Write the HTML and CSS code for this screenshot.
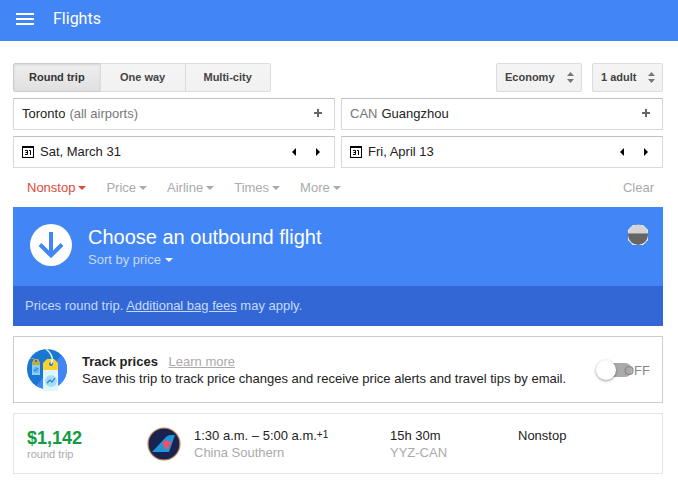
FILE: index.html
```
<!DOCTYPE html>
<html lang="en">
<head>
  <meta charset="UTF-8">
  <meta name="viewport" content="width=device-width, initial-scale=1">
  <title>Flights</title>
  <link rel="stylesheet" href="styles.css">
</head>
<body>
  <header class="topbar">
    <button class="menu-btn" aria-label="Main menu">
      <svg width="18" height="12" viewBox="0 0 18 12" fill="#fff"><path d="M0 0h18v2H0zM0 5h18v2H0zM0 10h18v2H0z"/></svg>
    </button>
    <h1>Flights</h1>
  </header>

  <main>
    <form class="search">
      <div class="options">
        <div class="tabs">
          <button type="button" class="tab active">Round trip</button>
          <button type="button" class="tab">One way</button>
          <button type="button" class="tab">Multi-city</button>
        </div>
        <div class="select-box cabin">
          <select aria-label="Cabin class">
            <option>Economy</option>
            <option>Business</option>
            <option>First</option>
          </select>
          <svg width="7" height="11" viewBox="0 0 7 11" fill="#777"><path d="M3.500 0L7 4H0zM0 7h7l-3.500 4z"/></svg>
        </div>
        <div class="select-box people">
          <select aria-label="Passengers">
            <option>1 adult</option>
            <option>2 adults</option>
          </select>
          <svg width="7" height="11" viewBox="0 0 7 11" fill="#777"><path d="M3.500 0L7 4H0zM0 7h7l-3.500 4z"/></svg>
        </div>
      </div>

      <div class="fields">
        <div class="field">
          <input class="place" type="text" value="Toronto" aria-label="From">
          <span class="hint">(all airports)</span>
          <button type="button" class="step" aria-label="Add origin">
            <svg width="8" height="8" viewBox="0 0 8 8" fill="#666"><path d="M3 0h2v3h3v2H5v3H3V5H0V3h3z"/></svg>
          </button>
        </div>
        <div class="field">
          <span class="hint">CAN</span>
          <input class="place" type="text" value="Guangzhou" aria-label="To">
          <button type="button" class="step" aria-label="Add destination">
            <svg width="8" height="8" viewBox="0 0 8 8" fill="#666"><path d="M3 0h2v3h3v2H5v3H3V5H0V3h3z"/></svg>
          </button>
        </div>
        <div class="field">
          <svg class="cal" width="12" height="12" viewBox="0 0 12 12"><path d="M0 0h12v12H0zM1 2v9h10V2z" fill="#000" fill-rule="evenodd"/><path d="M3 4.500h2.500v4H3M3.500 6.500h2M7 4.500h1.500v4.500" fill="none" stroke="#000"/></svg>
          <input class="date" type="text" value="Sat, March 31" aria-label="Departure date">
          <button type="button" class="step" aria-label="Earlier departure">
            <svg width="4" height="8" viewBox="0 0 4 8"><path d="M4 0v8L0 4z"/></svg>
          </button>
          <button type="button" class="step" aria-label="Later departure">
            <svg width="4" height="8" viewBox="0 0 4 8"><path d="M0 0l4 4-4 4z"/></svg>
          </button>
        </div>
        <div class="field">
          <svg class="cal" width="12" height="12" viewBox="0 0 12 12"><path d="M0 0h12v12H0zM1 2v9h10V2z" fill="#000" fill-rule="evenodd"/><path d="M3 4.500h2.500v4H3M3.500 6.500h2M7 4.500h1.500v4.500" fill="none" stroke="#000"/></svg>
          <input class="date" type="text" value="Fri, April 13" aria-label="Return date">
          <button type="button" class="step" aria-label="Earlier return">
            <svg width="4" height="8" viewBox="0 0 4 8"><path d="M4 0v8L0 4z"/></svg>
          </button>
          <button type="button" class="step" aria-label="Later return">
            <svg width="4" height="8" viewBox="0 0 4 8"><path d="M0 0l4 4-4 4z"/></svg>
          </button>
        </div>
      </div>

      <div class="filters">
        <button type="button" class="filter drop on">Nonstop</button>
        <button type="button" class="filter drop">Price</button>
        <button type="button" class="filter drop">Airline</button>
        <button type="button" class="filter drop">Times</button>
        <button type="button" class="filter drop">More</button>
        <button type="button" class="filter clear">Clear</button>
      </div>
    </form>

    <section class="banner">
      <div class="banner-top">
        <svg width="42" height="42" viewBox="0 0 42 42"><circle cx="21" cy="21" r="21" fill="#fff"/><path d="M21 8v24M10 20.500l11 11 11-11" fill="none" stroke="#4285f4" stroke-width="4"/></svg>
        <div class="banner-text">
          <h2>Choose an outbound flight</h2>
          <button class="sort drop">Sort by price</button>
        </div>
        <svg class="avatar" width="22" height="22" viewBox="0 0 22 22">
          <path d="M6 1h10l5 5v10l-5 5H6l-5-5V6z" fill="#fff"/>
          <path d="M1 9.500a10 9 0 0 1 20 0z" fill="#d4d4d4"/>
          <path d="M1 10h20v1a10 10 0 0 1-20 0z" fill="#666"/>
          <path d="M1 9h20v1H1z" fill="#999"/>
        </svg>
      </div>
      <p class="banner-note">Prices round trip. <a href="#">Additional bag fees</a> may apply.</p>
    </section>

    <section class="track">
      <svg width="40" height="42" viewBox="0 0 40 42">
        <defs><clipPath id="disc"><circle cx="20" cy="20" r="20"/></clipPath></defs>
        <g clip-path="url(#disc)">
          <path d="M0 0h40v40H0z" fill="#1976d2"/>
          <path d="M36 4L10 36v6h32V4z" fill="#4285f4"/>
          <path d="M2 10q5-2 7 2" fill="none" stroke="#64a9e8"/>
        </g>
        <path d="M5 14l2-4h4l2 4v12H5z" fill="#90cdf4"/>
        <path d="M5 14l2-4h4l2 4v2H5z" fill="#c9a83c"/>
        <circle cx="9" cy="12" r="1" fill="#1565c0"/>
        <circle cx="9" cy="21" r="3" fill="#64b5f6"/>
        <path d="M7 22l2-1 2-2" fill="none" stroke="#1976d2"/>
        <path d="M16 21h15v20q0 1-1 1H17q-1 0-1-1z" fill="#e0f7fa"/>
        <path d="M16 21v-7l4-4h7l4 4v7z" fill="#fdd130"/>
        <circle cx="24" cy="15" r="2" fill="#1976d2"/>
        <path d="M19 0c5 4 8 9 5 15" fill="none" stroke="#e0f7fa" stroke-width="1.500"/>
        <circle cx="24" cy="32" r="6" fill="#a5dcf7"/>
        <path d="M20 34l3-3 2 2 3-4" fill="none" stroke="#2979d8" stroke-width="1.200"/>
      </svg>
      <div class="track-text">
        <h3>Track prices</h3>
        <a href="#">Learn more</a>
        <p>Save this trip to track price changes and receive price alerts and travel tips by email.</p>
      </div>
      <label class="switch">
        <input type="checkbox" aria-label="Track prices">
        <span>OFF</span>
      </label>
    </section>

    <article class="flight">
      <div>
        <div class="price">$1,142</div>
        <div class="price-note">round trip</div>
      </div>
      <svg width="34" height="34" viewBox="0 0 34 34">
        <circle cx="17" cy="17" r="16" fill="#18244f" stroke="#c58a60" stroke-width="1.200"/>
        <path d="M5 25L19 10q2-2 5-2h4l-6 17z" fill="#1e96d8"/>
        <path d="M17 13l2 1 2-1 1 2 2-1v3l-2 1v3l-2 1h-2l-1-4-2-1v-2l2 1z" fill="#f0506a"/>
      </svg>
      <div>
        <div>1:30 a.m. – 5:00 a.m.<sup>+1</sup></div>
        <div class="muted">China Southern</div>
      </div>
      <div>
        <div>15h 30m</div>
        <div class="muted">YYZ-CAN</div>
      </div>
      <div>Nonstop</div>
    </article>
  </main>
</body>
</html>
```
FILE: styles.css
```
* {
  box-sizing: border-box;
}

body {
  margin: 0;
  font-family: "Liberation Sans", Arial, sans-serif;
  font-size: 13px;
  line-height: 17px;
  color: #222;
  background: #fff;
}

h1, h2, h3, p {
  margin: 0;
}

button, input, select {
  font: inherit;
  color: inherit;
  margin: 0;
  padding: 0;
  border: none;
  background: none;
}

button {
  cursor: pointer;
}

svg {
  display: block;
  flex: none;
}

.topbar {
  display: flex;
  align-items: center;
  gap: 19px;
  height: 41px;
  padding: 0 16px 4px;
  background: #4285f4;
}

.topbar h1 {
  font: 16px/20px Roboto, sans-serif;
  color: #fff;
}

main {
  padding: 22px 15px 6px 13px;
}

.options {
  display: flex;
  gap: 10px;
  margin-bottom: 6px;
  font-size: 11px;
  font-weight: bold;
  color: #444;
}

.tabs {
  display: flex;
  margin-right: auto;
}

.tab {
  min-width: 86px;
  height: 29px;
  padding: 0 15px;
  margin-left: -1px;
  border: 1px solid #dcdcdc;
  background: linear-gradient(#f5f5f5, #f1f1f1);
}

.tab:first-child {
  margin-left: 0;
  border-radius: 2px 0 0 2px;
}

.tab:last-child {
  border-radius: 0 2px 2px 0;
}

.tab.active {
  border-color: #ccc;
  background: linear-gradient(#eee, #e0e0e0);
  box-shadow: inset 0 1px 2px rgba(0,0,0,0.1);
  color: #333;
}

.select-box {
  position: relative;
}

.select-box select {
  appearance: none;
  width: 100%;
  height: 29px;
  padding: 0 8px;
  border: 1px solid #dcdcdc;
  border-radius: 2px;
  background: linear-gradient(#f5f5f5, #f1f1f1);
}

.select-box svg {
  position: absolute;
  right: 8px;
  top: 9px;
  pointer-events: none;
}

.cabin {
  width: 86px;
}

.people {
  width: 71px;
}

.fields {
  display: grid;
  grid-template-columns: 1fr 1fr;
  gap: 6px;
}

.field {
  display: flex;
  align-items: center;
  height: 32px;
  padding: 0 4px 2px 8px;
  border: 1px solid #d9d9d9;
  border-top-color: #c0c0c0;
}

.place {
  field-sizing: content;
}

.date {
  flex: 1;
  min-width: 0;
}

.hint {
  color: #777;
}

.place + .hint,
.hint + .place {
  margin-left: 4px;
}

.cal {
  margin: 2px 6px 0 0;
}

.step {
  display: flex;
  align-items: center;
  justify-content: center;
  width: 24px;
  height: 28px;
}

.date ~ .step {
  padding-top: 2px;
}

.hint ~ .step {
  margin-left: auto;
}

.filters {
  display: flex;
  gap: 20px;
  padding: 11px 9px 11px 14px;
}

.filter {
  color: #aaa;
}

.filter.on {
  color: #dd4b39;
}

.filter.clear {
  margin-left: auto;
}

.drop::after {
  content: "";
  display: inline-block;
  margin-left: 3px;
  vertical-align: 2px;
  border: 4px solid transparent;
  border-top-color: currentColor;
  border-bottom: none;
}

.banner {
  background: #4285f4;
  color: #fff;
}

.banner-top {
  display: flex;
  align-items: flex-start;
  height: 79px;
  padding: 17px 14px 0 17px;
}

.banner-text {
  flex: 1;
  padding-left: 16px;
}

.banner-text h2 {
  margin-bottom: 1px;
  font-size: 20px;
  font-weight: normal;
  line-height: 26px;
}

.sort {
  color: #c6dafc;
}

.sort::after {
  margin-left: 4px;
  border-top-color: #fff;
}

.banner-note {
  padding: 11px 12px 12px;
  background: #3367d6;
  color: #c6dafc;
}

.banner-note a {
  color: inherit;
}

.track {
  display: flex;
  align-items: center;
  min-height: 67px;
  margin-top: 10px;
  padding: 1px 12px 0 13px;
  border: 1px solid #ccc;
}

.track-text {
  flex: 1;
  padding: 0 15px;
}

.track h3 {
  display: inline;
  margin-right: 7px;
  font-size: 13px;
}

.track a {
  color: #aaa;
}

.switch {
  display: flex;
  align-items: center;
  color: #888;
}

.switch input {
  appearance: none;
  position: relative;
  width: 34px;
  height: 14px;
  margin-right: -8px;
  border-radius: 7px;
  background: #aaa;
}

.switch input::before {
  content: "";
  position: absolute;
  left: -2px;
  top: -3px;
  width: 20px;
  height: 20px;
  border-radius: 50%;
  background: #fff;
  box-shadow: 0 1px 3px rgba(0,0,0,0.4);
}

.switch span {
  position: relative;
}

.flight {
  display: grid;
  grid-template-columns: 120px 47px 196fr 128fr 131fr;
  margin-top: 10px;
  padding: 13px 13px 12px;
  border: 1px solid #e5e5e5;
}

.price {
  font-size: 18px;
  font-weight: bold;
  line-height: 23px;
  color: #0f9d40;
}

.price-note {
  font-size: 11px;
  line-height: 8px;
  color: #aaa;
}

.muted {
  color: #aaa;
}

sup {
  font-size: 10px;
  line-height: 0;
  vertical-align: 2px;
}
```
